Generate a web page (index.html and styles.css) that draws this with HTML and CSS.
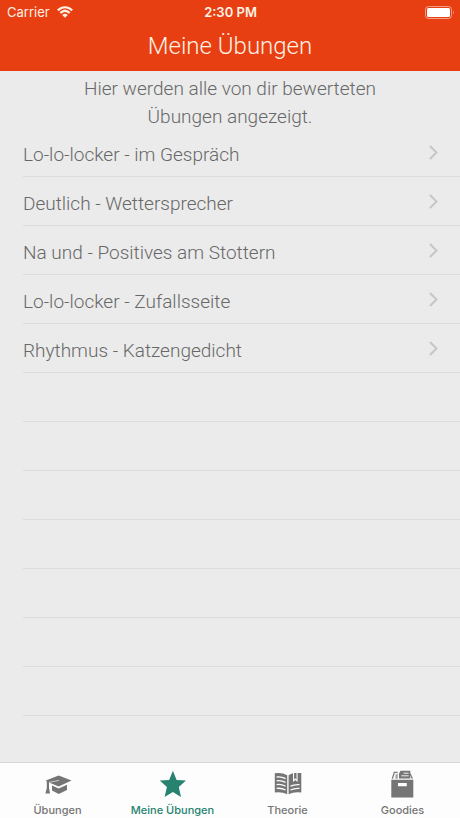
FILE: index.html
```html
<!DOCTYPE html>
<html lang="de">
<head>
<meta charset="utf-8">
<meta name="viewport" content="width=device-width, initial-scale=1">
<title>Meine Übungen</title>
<link rel="stylesheet" href="styles.css">
</head>
<body>
<header class="top">
  <div class="status">
    <div class="carrier">
      <span>Carrier</span>
      <svg width="16" height="12" viewBox="0 0 16 12" fill="none" stroke="currentColor" stroke-width="2.2" aria-hidden="true">
        <path d="M.8 4.4C5 .2 11 .2 15.2 4.4M3.3 7C6.2 4.2 9.8 4.2 12.7 7"/>
        <path d="M5.2 8.9Q8 6.5 10.8 8.9L8 11.7Z" fill="currentColor" stroke="none"/>
      </svg>
    </div>
    <span class="time">2:30 PM</span>
    <svg class="battery" width="29" height="13" viewBox="0 0 29 13" aria-hidden="true">
      <rect x=".5" y=".5" width="26" height="12" rx="3" fill="none" stroke="#fff" stroke-opacity=".5"/>
      <rect x="2" y="2" width="23" height="9" rx="1.5" fill="#fff"/>
      <path d="M28 4.5Q29.5 6.5 28 8.5Z" fill="#fff" fill-opacity=".5"/>
    </svg>
  </div>
  <h1 class="title">Meine Übungen</h1>
</header>
<main class="content">
  <p class="intro">Hier werden alle von dir bewerteten Übungen angezeigt.</p>
  <ul class="list">
    <li class="row"><a class="link" href="#"><span class="label">Lo-lo-locker - im Gespräch</span><svg class="chevron" width="9" height="15" viewBox="0 0 9 15"><path d="M1 1L7.5 7.5L1 14"/></svg></a></li>
    <li class="row"><a class="link" href="#"><span class="label">Deutlich - Wettersprecher</span><svg class="chevron" width="9" height="15" viewBox="0 0 9 15"><path d="M1 1L7.5 7.5L1 14"/></svg></a></li>
    <li class="row"><a class="link" href="#"><span class="label">Na und - Positives am Stottern</span><svg class="chevron" width="9" height="15" viewBox="0 0 9 15"><path d="M1 1L7.5 7.5L1 14"/></svg></a></li>
    <li class="row"><a class="link" href="#"><span class="label">Lo-lo-locker - Zufallsseite</span><svg class="chevron" width="9" height="15" viewBox="0 0 9 15"><path d="M1 1L7.5 7.5L1 14"/></svg></a></li>
    <li class="row"><a class="link" href="#"><span class="label">Rhythmus - Katzengedicht</span><svg class="chevron" width="9" height="15" viewBox="0 0 9 15"><path d="M1 1L7.5 7.5L1 14"/></svg></a></li>
    <li class="row"></li>
    <li class="row"></li>
    <li class="row"></li>
    <li class="row"></li>
    <li class="row"></li>
    <li class="row"></li>
    <li class="row"></li>
  </ul>
</main>
<nav class="tabs">
  <a class="tab" href="#">
    <svg class="icon" width="28" height="28" viewBox="0 0 28 28" fill="currentColor" aria-hidden="true">
      <path d="M14.7 5.5L27.5 10.4L14.7 16.6L5 12.4V18L6 23.6H1.4L2.8 18V11.4L1.8 10.6Z"/>
      <path d="M8 15.4L14.7 18.6L23 14.8V20L14.7 24L8 20.6Z"/>
      <path d="M15 10.4L5 12.4" fill="none" stroke="#fdfdfd" stroke-width=".6"/>
    </svg>
    <span>Übungen</span>
  </a>
  <a class="tab active" href="#" aria-current="page">
    <svg class="icon" width="28" height="28" viewBox="0 0 28 28" fill="currentColor" aria-hidden="true">
      <path d="M13.9 .8L17.6 10L27 10.6L19.8 17L22 27L13.9 21.9L5.6 27L7.9 17L.8 10.6L10.2 10Z"/>
    </svg>
    <span>Meine Übungen</span>
  </a>
  <a class="tab" href="#">
    <svg class="icon" width="28" height="28" viewBox="0 0 28 28" fill="currentColor" aria-hidden="true">
      <path d="M.8 3.2Q8 2.2 13.2 5.2V24.2Q8 21.4 .8 22.4Z"/>
      <path d="M14.6 5.2Q16.7 3.9 19 3.3V12L21.3 10L23.6 12V3H27.3V22.4Q20 21.4 14.6 24.2Z"/>
      <path d="M20.1 3H22.5V9.4L21.3 8.2L20.1 9.4Z"/>
      <path d="M2.6 7Q7.5 6.4 11.6 8.6M2.6 10.8Q7.5 10.2 11.6 12.4M2.6 14.6Q7.5 14 11.6 16.2M2.6 18.4Q7.5 17.8 11.6 20M16.5 16.1Q20.5 14.2 25.5 14.6M16.5 20Q20.5 18 25.5 18.4" fill="none" stroke="#fdfdfd" stroke-width="1.3"/>
    </svg>
    <span>Theorie</span>
  </a>
  <a class="tab" href="#">
    <svg class="icon" width="28" height="28" viewBox="0 0 28 28" fill="currentColor" aria-hidden="true">
      <path fill-rule="evenodd" d="M2.3 9.7H24.3V27.6H2.3ZM9 12.9V16.3H17.8V12.9Z"/>
      <path d="M3.3 8.7L5.3 2.4H8.6M21.2 3.7L23.4 8.7" fill="none" stroke="currentColor" stroke-width="1.2"/>
      <path d="M11.5 .8H21.3V8.4H10V3.5Z"/>
      <path d="M14.5 3.2H19.6M12.3 5.8H19.6" fill="none" stroke="#fdfdfd" stroke-width=".9"/>
      <path d="M6.4 8.8V4.7L8.8 3.4V8.8Z" opacity=".65"/>
    </svg>
    <span>Goodies</span>
  </a>
</nav>
</body>
</html>
```
FILE: styles.css
```css
* {
  box-sizing: border-box;
}

body {
  margin: 0;
  min-height: 100vh;
  display: flex;
  flex-direction: column;
  background: #ebebeb;
  color: #686868;
  font-family: Roboto, "Liberation Sans", sans-serif;
}

.top {
  background: #e73f12;
  color: #fff1e5;
  padding-bottom: 9px;
}

.status {
  display: grid;
  grid-template-columns: 1fr auto 1fr;
  align-items: center;
  height: 24px;
  padding: 0 6px 0 7px;
  font-family: Inter, sans-serif;
  font-size: 13px;
}

.carrier {
  display: flex;
  align-items: center;
  gap: 7px;
}

.time {
  font-weight: 600;
}

.battery {
  justify-self: end;
}

.title {
  margin: 0;
  padding-top: 6px;
  font-size: 24px;
  line-height: 32px;
  font-weight: 300;
  text-align: center;
}

.content {
  flex: 1;
}

.intro {
  max-width: 350px;
  margin: 0 auto;
  padding: 4px 16px 0;
  font-size: 19px;
  line-height: 28px;
  font-weight: 300;
  text-align: center;
}

.list {
  list-style: none;
  margin: -3px 0 0;
  padding: 0 0 0 23px;
}

.row {
  height: 49px;
  border-bottom: 1px solid #dcdcdc;
}

.link {
  display: flex;
  align-items: center;
  justify-content: space-between;
  height: 100%;
  padding-right: 22px;
  color: inherit;
  text-decoration: none;
}

.label {
  padding-top: 6px;
  font-size: 19px;
  line-height: 24px;
  font-weight: 300;
}

.chevron {
  fill: none;
  stroke: #c6c6c6;
  stroke-width: 2;
}

.tabs {
  display: grid;
  grid-template-columns: repeat(4, 1fr);
  height: 56px;
  padding-top: 7px;
  background: #fdfdfd;
  border-top: 1px solid #d8d8d8;
}

.tab {
  display: flex;
  flex-direction: column;
  align-items: center;
  gap: 4px;
  color: #757575;
  font-family: Inter, sans-serif;
  font-size: 11px;
  line-height: 16px;
  font-weight: 500;
  text-decoration: none;
}

.icon {
  flex: none;
}

.active {
  color: #27826f;
}
```
